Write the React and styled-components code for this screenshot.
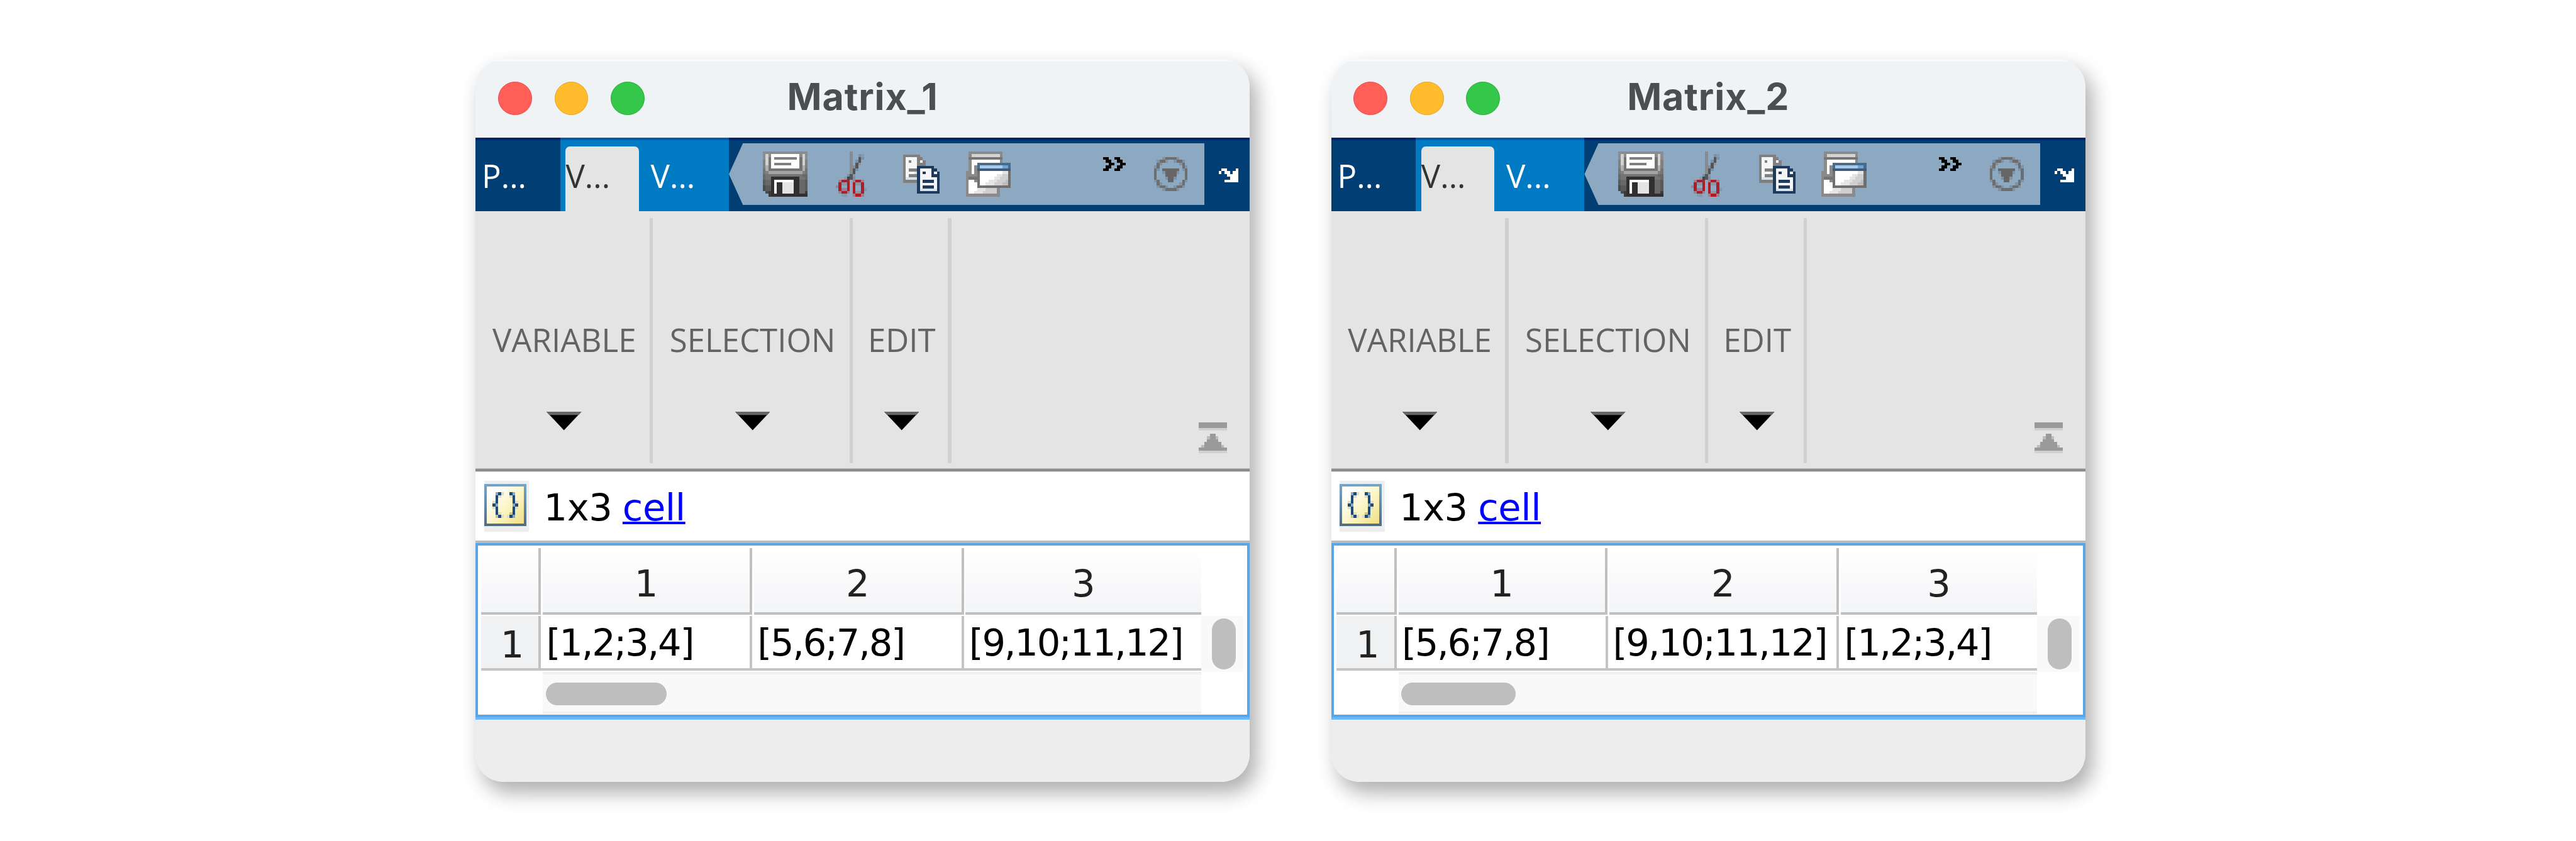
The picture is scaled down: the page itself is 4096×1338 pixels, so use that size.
import React from "react";
import styled, { createGlobalStyle } from "styled-components";

// pixel art icons: every char is one 5px block of the 16x16 toolbar icons
const Pixels = ({ rows, palette, children }) => {
  const w = rows[0].length;
  const h = rows.length;
  return (
    <svg width={w * 5} height={h * 5} viewBox={`0 0 ${w} ${h}`} shapeRendering="crispEdges" style={{ display: "block", flex: "none" }}>
      {children}
      {rows.map((row, y) =>
        row.split("").map((c, x) =>
          palette[c] ? <rect key={x + "-" + y} x={x} y={y} width="1" height="1" fill={palette[c]} /> : null
        )
      )}
    </svg>
  );
};

const saveIcon = {
  palette: { a: "#8c8c8c", b: "#808080", c: "#747474", d: "#686868", e: "#5a5a5a", f: "#4a4a4a", i: "#3c3c3c", j: "#303030", k: "#b0b0b0", l: "#d2d2d2", m: "#808080", o: "#a4a4a4", w: "#ffffff", h: "#e4e4e4" },
  rows: [
    "aaaaaaaaaaaaaaaa",
    "alawwwwwwwwwwala",
    "alcwmmmmmmmmwcla",
    "blcwwwwwwwwwwclb",
    "blcwmmmmmmwwwclb",
    "bkcwwwwwwwwwwckb",
    "ckcccccccccccckc",
    "cboooooooooooobc",
    "dcccccccccccccdd",
    "dccjjjjjjjjjjccd",
    "eddjwwwwwwwjjdde",
    "eddjwjjhhhhjjdde",
    "feejwjjhhhhjjdde",
    "feejwjjhhhhjjdde",
    ".fijwjjhhhhjjddi",
    "..ijjjjjjjjjjjjj",
  ],
};

const scissorsIcon = {
  palette: { g: "#8a8a8a", s: "#555555", t: "#7a90a6", f: "#8499ad", i: "#444444", q: "#8f93a8", r: "#b01c26", p: "#9c7f92", x: "#8a3040" },
  rows: [
    ".....g.....",
    ".....g..tf.",
    ".....g..st.",
    ".....g.ts..",
    ".....g.sf..",
    ".....gts...",
    ".....gst...",
    ".....gs....",
    "....tsq....",
    "...fist....",
    ".prrx.prrp.",
    ".rqqr.rqqr.",
    "pr..r.r..r.",
    ".rppr.r..rf",
    ".prrp.rqqr.",
    "..ff..prrp.",
  ],
};

const copyIcon = {
  palette: { g: "#808080", w: "#f4f6f8", v: "#d8e4ec", N: "#1f3a5f" },
  rows: [
    "gggggg.......",
    "gwwwwgg......",
    "gwgwwgwg.....",
    "gwwwwggg.....",
    "gwwwwNNNNNN..",
    "gwgggNwwwwNN.",
    "gwwwvNwNwwNwN",
    "gwgggNwwwwNNN",
    "gvvvvNwwwwwwN",
    "gggggNwNNNNwN",
    ".....NwwwwwwN",
    ".....NwNNNNwN",
    ".....NvvvvvvN",
    ".....NNNNNNNN",
  ],
};

const windowsIcon = {
  palette: { a: "#8a8a8a", b: "#757575", L: "#d4d4d4", w: "#ffffff", S: "#4a6a8c", B: "#a3cdea", C: "#6aa7d6", D: "#3f5b7b", G: "#6f6f6f", v: "#e4e4e4", u: "#cfcfcf", t: "#bdbdbd" },
  rows: [
    ".aaaaaaaaaaaa...",
    ".aLLLLLLLLLLa...",
    ".bbbbbbbbbbbb...",
    ".awwwwwwwwwwa...",
    ".awwSSSSSSSSSSSS",
    ".awaSBBBBBBBBCCS",
    ".awaDDDDDDDDDDDD",
    "aawaGwwwwwwwwvvG",
    "aaaabwwwwwwvvuuG",
    "abbbbwwwwwvvuuuG",
    "awwaGwwwvvvuuutG",
    "awwwGwwvvvuuuttG",
    "awwwGGGGGGGGGGGG",
    "awwwvvvuuuua....",
    "awwvvvuuuuua....",
    "aaaaaaaaaaaa....",
  ],
};

const chevronIcon = {
  palette: { X: "#000000" },
  rows: ["XX..XX..", ".XX..XX.", "..XX..XX", ".XX..XX.", "XX..XX.."],
};

const circleIcon = {
  palette: { X: "#6e6e6e", p: "#7f93a6", T: "#666666" },
  rows: [
    "...pXXXXp...",
    ".pXXp..pXXp.",
    ".Xp......pX.",
    "pX........Xp",
    "Xp.TTTTTT.pX",
    "X..pTTTTp..X",
    "X...TTTT...X",
    "X...pTTp...X",
    "pX...TT...Xp",
    ".Xp......pX.",
    ".pXXp..pXXp.",
    "...pXXXXp...",
  ],
};

const undockIcon = {
  palette: { X: "#ffffff" },
  rows: [".XX...X", "X.XX.XX", "...XXXX", "....XXX", "..XXXXX"],
};

const collapseIcon = {
  palette: { a: "#9a9a9a", l: "#d0d0d0", m: "#bcbcbc" },
  rows: [
    "aaaaaaaaaa",
    "aaaaaaaaaa",
    "llllllllll",
    "..........",
    "....aa....",
    "...maam...",
    "...aaaa...",
    "..aaaaaa..",
    ".maaaaaam.",
    "aaaaaaaaaa",
    "llllllllll",
  ],
};

const braceIcon = {
  palette: { N: "#1b4a80", g: "#8fa8bc", l: "#dcdcc8", y: "#c4c898" },
  rows: [
    "...............",
    "...............",
    "...............",
    "....gNl..Ng....",
    "....Nl...lN....",
    "....N.....N....",
    "...lN.....Nl...",
    "...Ng.....gN...",
    "...lN.....Nl...",
    "....N.....N....",
    "....Nl...yN....",
    "....yNl.lNg....",
    "...............",
    "...............",
    "...............",
  ],
};

const BraceIcon = () => (
  <Pixels {...braceIcon}>
    <defs>
      <linearGradient id="braceEdge" x1="0" y1="0" x2="0" y2="1">
        <stop offset="0" stopColor="#74a5cb" />
        <stop offset="1" stopColor="#526b85" />
      </linearGradient>
      <linearGradient id="bracePaper" x1="0" y1="0" x2="1" y2="1">
        <stop offset="0.15" stopColor="#ffffff" />
        <stop offset="0.55" stopColor="#fbf5c4" />
        <stop offset="1" stopColor="#f0df86" />
      </linearGradient>
    </defs>
    <rect width="15" height="15" fill="url(#braceEdge)" />
    <rect x="1" y="1" width="13" height="13" fill="url(#bracePaper)" />
  </Pixels>
);

const DropArrow = () => (
  <svg width="62" height="33" viewBox="0 0 62 33" style={{ display: "block" }}>
    <polygon points="0,0 62,0 31,33" fill="#000" />
    <polygon points="0,0 62,0 57,6 5,6" fill="#666" />
  </svg>
);

const windows = [
  {
    title: "Matrix_1",
    width: 1375,
    cols: [375, 376, 422],
    cells: ["[1,2;3,4]", "[5,6;7,8]", "[9,10;11,12]"],
    thumb: 215,
  },
  {
    title: "Matrix_2",
    width: 1340,
    cols: [375, 411, 352],
    cells: ["[5,6;7,8]", "[9,10;11,12]", "[1,2;3,4]"],
    thumb: 203,
  },
];

const ribbonSections = [
  { label: "VARIABLE", width: 309 },
  { label: "SELECTION", width: 350 },
  { label: "EDIT", width: 170 },
];

function VariableWindow({ data }) {
  return (
    <Window $width={data.width}>
      <TitleBar>
        <Lights>
          <Light $bg="#ff5f57" $edge="#e5484a" />
          <Light $bg="#ffbd2e" $edge="#e3a01e" />
          <Light $bg="#34c749" $edge="#1fae30" />
        </Lights>
        <Title>{data.title}</Title>
      </TitleBar>

      <TabBar>
        <PlotTab>
          <TabLabel $color="#fff">P...</TabLabel>
        </PlotTab>
        <BlueTabs>
          <ActiveTab>
            <TabLabel $color="#333" $top={14}>V...</TabLabel>
          </ActiveTab>
          <ViewTab>
            <TabLabel $color="#fff">V...</TabLabel>
          </ViewTab>
        </BlueTabs>
        <QuickAccess>
          <IconSlot $left={60}><Pixels {...saveIcon} /></IconSlot>
          <IconSlot $left={50}><Pixels {...scissorsIcon} /></IconSlot>
          <IconSlot $left={65}><Pixels {...copyIcon} /></IconSlot>
          <IconSlot $left={46}><Pixels {...windowsIcon} /></IconSlot>
          <Chevrons><Pixels {...chevronIcon} /></Chevrons>
          <IconSlot $left={50}><Pixels {...circleIcon} /></IconSlot>
        </QuickAccess>
        <UndockSlot><Pixels {...undockIcon} /></UndockSlot>
      </TabBar>

      <Ribbon>
        {ribbonSections.map((section) => (
          <React.Fragment key={section.label}>
            <RibbonSection $width={section.width}>
              <SectionLabel>{section.label}</SectionLabel>
              <DropArrow />
            </RibbonSection>
            <RibbonDivider />
          </React.Fragment>
        ))}
        <CollapseSlot><Pixels {...collapseIcon} /></CollapseSlot>
      </Ribbon>

      <InfoRow>
        <TypeBadge><BraceIcon /></TypeBadge>
        <InfoText>
          1x3 <a href="#cell">cell</a>
        </InfoText>
      </InfoRow>

      <TableFrame>
        <HeaderRow>
          <CornerCell />
          {data.cols.map((w, i) => (
            <HeaderCell key={i} $width={w} $last={i === 2}>{i + 1}</HeaderCell>
          ))}
        </HeaderRow>
        <DataRow>
          <RowHeader>1</RowHeader>
          {data.cols.map((w, i) => (
            <DataCell key={i} $width={w} $last={i === 2}>{data.cells[i]}</DataCell>
          ))}
          <VerticalTrack><VerticalThumb /></VerticalTrack>
        </DataRow>
        <HorizontalTrack $width={data.cols[0] + data.cols[1] + data.cols[2] - 3}>
          <HorizontalThumb $width={data.thumb} />
        </HorizontalTrack>
      </TableFrame>

      <Footer />
    </Window>
  );
}

export default function App() {
  return (
    <>
      <GlobalStyle />
      <Page>
        {windows.map((data) => (
          <VariableWindow key={data.title} data={data} />
        ))}
      </Page>
    </>
  );
}

const GlobalStyle = createGlobalStyle`
  * { box-sizing: border-box; }
  html, body { margin: 0; background: #fff; overflow: hidden; }
`;

// all sizes below are the reference's own pixels
const Page = styled.div`
  zoom: 0.895;
  width: 4575px;
  height: 1495px;
  padding: 105px 0 0 845px;
  display: flex;
  align-items: flex-start;
  gap: 145px;
  background: #fff;
`;

const Window = styled.div`
  width: ${(p) => p.$width}px;
  border-radius: 50px;
  overflow: hidden;
  box-shadow: 12px 18px 36px rgba(0, 0, 0, 0.32);
`;

const TitleBar = styled.div`
  height: 140px;
  display: grid;
  grid-template-columns: 1fr auto 1fr;
  align-items: center;
  background: linear-gradient(#f8f9fb 5px, #eff3f6 5px);
`;

const Lights = styled.div`
  display: flex;
  gap: 40px;
  padding-left: 40px;
`;

const Light = styled.span`
  width: 60px;
  height: 60px;
  border-radius: 50%;
  background: ${(p) => p.$bg};
  border: 2px solid ${(p) => p.$edge};
`;

const Title = styled.div`
  font-family: Inter, "Liberation Sans", sans-serif;
  font-weight: 700;
  font-size: 66px;
  letter-spacing: 1px;
  line-height: 80px;
  color: #4c4e51;
  margin-top: -6px;
`;

const TabBar = styled.div`
  height: 130px;
  display: flex;
  background: #003e73;
  border-top: 5px solid #00266a;
`;

const PlotTab = styled.div`
  width: 150px;
  padding-left: 11px;
  padding-top: 24px;
`;

const BlueTabs = styled.div`
  width: 300px;
  margin-top: -5px;
  padding-left: 10px;
  display: flex;
  align-items: flex-end;
  background: #007ac2;
  border-top: 5px solid #005ca8;
`;

const ActiveTab = styled.div`
  width: 130px;
  height: 115px;
  background: #e4e4e4;
  border-radius: 8px 8px 0 0;
`;

const ViewTab = styled.div`
  height: 125px;
  padding: 24px 0 0 21px;
`;

const TabLabel = styled.div`
  font-family: "Open Sans", sans-serif;
  font-size: 57px;
  line-height: 78px;
  white-space: nowrap;
  color: ${(p) => p.$color};
  padding-top: ${(p) => p.$top || 0}px;
`;

const QuickAccess = styled.div`
  flex: 1;
  height: 110px;
  margin-top: 5px;
  padding-right: 30px;
  display: flex;
  align-items: center;
  background: #8da9c1;
  clip-path: polygon(25px 0, 100% 0, 100% 100%, 25px 100%, 0 50%);
`;

const IconSlot = styled.div`
  margin-left: ${(p) => p.$left}px;
`;

const Chevrons = styled.div`
  margin-left: auto;
  margin-bottom: 35px;
`;

const UndockSlot = styled.div`
  width: 80px;
  padding-left: 25px;
  align-self: center;
`;

const Ribbon = styled.div`
  height: 464px;
  display: flex;
  background: #e4e4e4;
  border-bottom: 2px solid #e4e4e4;
  box-shadow: inset 0 -7px 0 -2px #8c8c8c;
`;

const RibbonSection = styled.div`
  width: ${(p) => p.$width}px;
  padding: 190px 0 0 6px;
  display: flex;
  flex-direction: column;
  align-items: center;
`;

const SectionLabel = styled.div`
  font-family: "Open Sans", sans-serif;
  font-size: 57px;
  line-height: 76px;
  color: #636363;
  margin-bottom: 91px;
`;

const RibbonDivider = styled.div`
  width: 6px;
  margin: 13px -1px 14px 0;
  background: #d0d0d0;
`;

const CollapseSlot = styled.div`
  margin: 0 40px 32px auto;
  align-self: flex-end;
`;

const InfoRow = styled.div`
  height: 126px;
  padding: 16px 0 0 15px;
  display: flex;
  align-items: flex-start;
  background: #fff;
  border-bottom: 5px solid #bbb;
`;

const TypeBadge = styled.div`
  width: 80px;
  height: 90px;
  padding-top: 5px;
  background: #eee;
`;

const InfoText = styled.div`
  font-family: "DejaVu Sans", sans-serif;
  font-size: 66px;
  color: #000;
  margin: 9px 0 0 26px;
  word-spacing: -2px;
  letter-spacing: -0.5px;
  a {
    color: #00f;
    text-decoration-thickness: 5px;
  }
`;

const TableFrame = styled.div`
  height: 310px;
  padding: 5px 0 0 5px;
  border: 5px solid #58a6e6;
  background: #fff;
`;

const HeaderRow = styled.div`
  display: flex;
`;

const headerFill = "linear-gradient(#ffffff, #f3f4f6)";

const CornerCell = styled.div`
  width: 107px;
  height: 118px;
  background: ${headerFill};
  border-right: 5px solid #c0c0c0;
  border-bottom: 5px solid #c0c0c0;
`;

const HeaderCell = styled.div`
  width: ${(p) => p.$width - 3}px;
  height: 118px;
  margin-left: 3px;
  padding-top: 24px;
  text-align: center;
  font-family: "DejaVu Sans", sans-serif;
  font-size: 66px;
  color: #222;
  background: ${headerFill};
  border-right: ${(p) => (p.$last ? "none" : "5px solid #c0c0c0")};
  border-bottom: 5px solid #c0c0c0;
`;

const DataRow = styled.div`
  display: flex;
  align-items: flex-start;
  margin-top: 2px;
  height: 100px;
`;

const RowHeader = styled.div`
  width: 107px;
  height: 98px;
  padding: 13px 26px 0 0;
  text-align: right;
  font-family: "DejaVu Sans", sans-serif;
  font-size: 66px;
  color: #222;
  background: #f0f1f3;
  border-right: 5px solid #c0c0c0;
  border-bottom: 5px solid #c4c4c4;
`;

const DataCell = styled.div`
  width: ${(p) => p.$width}px;
  height: 98px;
  padding: 10px 0 0 9px;
  white-space: nowrap;
  font-family: "DejaVu Sans", sans-serif;
  font-size: 66px;
  letter-spacing: -2.5px;
  color: #000;
  background: #fff;
  border-right: ${(p) => (p.$last ? "none" : "5px solid #c4c4c4")};
  border-bottom: 5px solid #c4c4c4;
`;

const VerticalTrack = styled.div`
  width: 75px;
  height: 100px;
  padding: 5px 0 0 19px;
  background: #f9f9f9;
`;

const VerticalThumb = styled.div`
  width: 42px;
  height: 90px;
  border-radius: 21px;
  background: #bebebe;
`;

const HorizontalTrack = styled.div`
  width: ${(p) => p.$width}px;
  height: 75px;
  margin-left: 110px;
  padding: 15px 0 0 5px;
  background: #f9f9f9;
  border-top: 5px solid #f0f0f0;
  border-bottom: 5px solid #f0f0f0;
`;

const HorizontalThumb = styled.div`
  width: ${(p) => p.$width}px;
  height: 40px;
  border-radius: 20px;
  background: #bebebe;
`;

const Footer = styled.div`
  height: 115px;
  background: #ededed;
  border-top: 5px solid #6cb8fa;
`;
